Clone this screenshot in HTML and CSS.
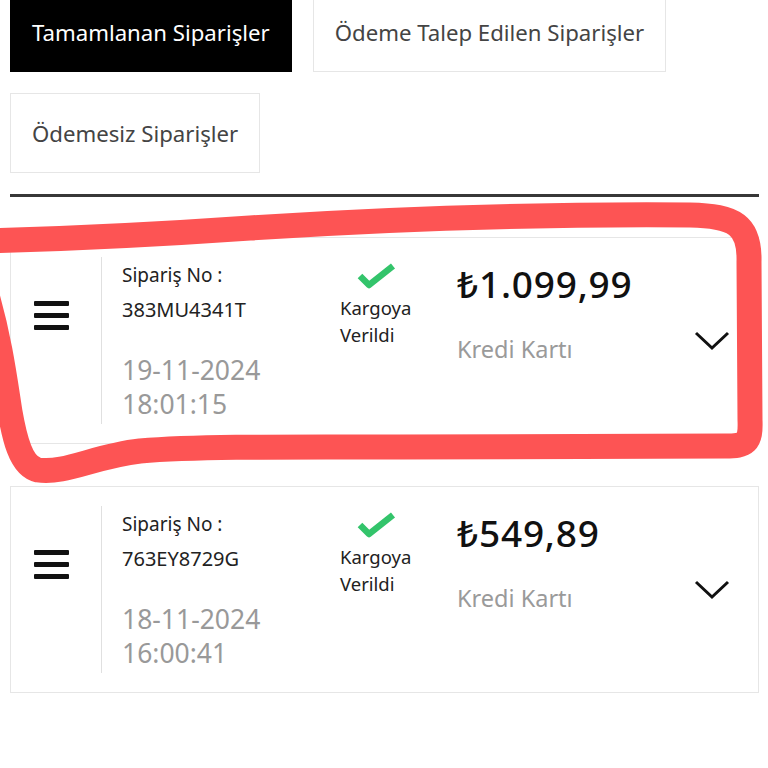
FILE: index.html
```html
<!DOCTYPE html>
<html lang="tr">
<head>
<meta charset="utf-8">
<title>Siparişler</title>
<link rel="stylesheet" href="styles.css">
</head>
<body>
<div class="tabs">
  <div class="tab active">Tamamlanan Siparişler</div>
  <div class="tab">Ödeme Talep Edilen Siparişler</div>
  <div class="tab">Ödemesiz Siparişler</div>
</div>
<div class="divider"></div>

<div class="orders">
  <div class="card">
    <div class="menu-col">
      <div class="burger"><span></span><span></span><span></span></div>
    </div>
    <div class="info-col">
      <div class="label">Sipariş No :</div>
      <div class="code">383MU4341T</div>
      <div class="date">19-11-2024<br>18:01:15</div>
    </div>
    <div class="status-col">
      <svg class="check" width="40" height="28" viewBox="0 0 40 28"><path d="M3 13 L12 22 L36 3" fill="none" stroke="#33c46b" stroke-width="6.5" stroke-linejoin="round"/></svg>
      <div class="status">Kargoya<br>Verildi</div>
    </div>
    <div class="price-col">
      <div class="price">₺1.099,99</div>
      <div class="method">Kredi Kartı</div>
    </div>
    <div class="chev-col">
      <svg width="36" height="20" viewBox="0 0 36 20"><path d="M2 2 L18 17 L34 2" fill="none" stroke="#111" stroke-width="3"/></svg>
    </div>
  </div>

  <div class="card">
    <div class="menu-col">
      <div class="burger"><span></span><span></span><span></span></div>
    </div>
    <div class="info-col">
      <div class="label">Sipariş No :</div>
      <div class="code">763EY8729G</div>
      <div class="date">18-11-2024<br>16:00:41</div>
    </div>
    <div class="status-col">
      <svg class="check" width="40" height="28" viewBox="0 0 40 28"><path d="M3 13 L12 22 L36 3" fill="none" stroke="#33c46b" stroke-width="6.5" stroke-linejoin="round"/></svg>
      <div class="status">Kargoya<br>Verildi</div>
    </div>
    <div class="price-col">
      <div class="price">₺549,89</div>
      <div class="method">Kredi Kartı</div>
    </div>
    <div class="chev-col">
      <svg width="36" height="20" viewBox="0 0 36 20"><path d="M2 2 L18 17 L34 2" fill="none" stroke="#111" stroke-width="3"/></svg>
    </div>
  </div>
</div>

<svg class="annotation" width="768" height="768" viewBox="0 0 768 768">
  <path d="M -15 241 C 60 239, 150 235, 250 228 C 400 218, 550 214, 690 215 C 735 216, 750 225, 749 262 L 750 420 C 751 443, 746 446, 725 446 L 400 447 C 300 447, 200 446, 140 451 C 95 456, 65 474, 38 470 C 20 466, 14 435, 10 412 C 5 380, 0 340, -14 292" fill="none" stroke="#fd5454" stroke-width="25" stroke-linecap="round" stroke-linejoin="round"/>
</svg>
</body>
</html>
```

FILE: styles.css
```css
html, body {
  margin: 0;
  padding: 0;
  background: #fff;
}
body {
  padding: 0 9px 0 10px;
  font-family: "Noto Sans", Lato, "DejaVu Sans", sans-serif;
  color: #222;
  overflow: hidden;
  height: 768px;
}
.tabs {
  display: flex;
  flex-wrap: wrap;
  gap: 21px;
  margin-top: -8px;
}
.tab {
  height: 80px;
  box-sizing: border-box;
  padding: 0 21px;
  display: flex;
  align-items: center;
  font-size: 22.2px;
  color: #444;
  border: 1px solid #e6e6e6;
  background: #fff;
}
.tab.active {
  background: #000;
  color: #fff;
  border-color: #000;
}
.divider {
  height: 3px;
  background: #383838;
  margin-top: 21px;
}
.orders {
  display: flex;
  flex-direction: column;
  gap: 42px;
  margin-top: 40px;
}
.card {
  display: flex;
  border: 1px solid #e6e6e6;
  height: 207px;
  box-sizing: border-box;
  padding: 19px 0;
}
.menu-col {
  width: 91px;
  box-sizing: border-box;
  border-right: 1px solid #e0e0e0;
  padding: 44px 0 0 23px;
}
.burger {
  display: flex;
  flex-direction: column;
  gap: 7px;
  width: 35px;
}
.burger span {
  display: block;
  height: 5px;
  background: #111;
  border-radius: 1px;
}
.info-col {
  width: 238px;
  box-sizing: border-box;
  padding: 5px 0 0 20px;
}
.label, .code {
  font-size: 19px;
  line-height: 26px;
  color: #222;
}
.code {
  font-size: 20px;
  margin-top: 9px;
}
.date {
  margin-top: 30px;
  font-size: 26.5px;
  line-height: 34px;
  color: #999;
}
.status-col {
  width: 117px;
  padding-top: 6px;
}
.check {
  display: block;
  margin-left: 17px;
}
.status {
  margin-top: 3px;
  font-size: 18.5px;
  line-height: 27px;
  color: #222;
}
.price-col {
  flex: 1;
  padding-top: 6px;
}
.price {
  font-size: 37px;
  line-height: 42px;
  font-weight: 500;
  letter-spacing: 0.8px;
  color: #111;
}
.method {
  margin-top: 30px;
  font-size: 23.5px;
  line-height: 28px;
  color: #9a9a9a;
}
.chev-col {
  width: 64px;
  display: flex;
  align-items: center;
}
.annotation {
  position: absolute;
  left: 0;
  top: 0;
  pointer-events: none;
}
```
